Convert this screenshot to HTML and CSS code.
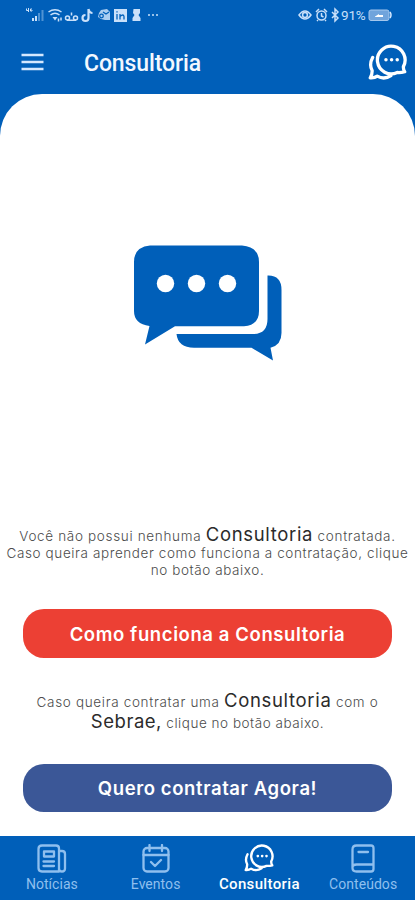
FILE: index.html
```html
<!DOCTYPE html>
<html lang="pt-BR">
<head>
<meta charset="utf-8">
<title>Consultoria</title>
<link rel="stylesheet" href="styles.css">
</head>
<body>
<svg class="defs" width="0" height="0" aria-hidden="true">
  <symbol id="chat" viewBox="0 0 40 38">
    <path d="M35.500 24.500A13.500 13.500 0 1 0 29.500 30.200Q33 30.500 36.800 29.500Q35.300 27.500 35.500 24.500Z"/>
    <path d="M5.500 15.500C2.800 20.500 3 24.500 5 28.200Q5.200 32 3.200 35.500Q7.400 35.800 10 33.800C14.500 36.300 19.500 35.800 23.300 33.200"/>
    <g fill="currentColor" stroke="none"><circle cx="18.500" cy="17.800" r="1.700"/><circle cx="24" cy="17.800" r="1.700"/><circle cx="29.500" cy="17.800" r="1.700"/></g>
  </symbol>
</svg>
<div class="app">
  <div class="status">
    <svg class="status-left" viewBox="0 0 138 18" width="138" height="18">
      <g fill="currentColor">
        <path d="M2.500 3.500v2h2M4.500 3v4M8 4H6.500v2H8V5" fill="none" stroke="currentColor" stroke-width="1"/>
        <path d="M8 13h2v3H8zM11 11h2v5h-2z"/>
        <path d="M14 8h2v8h-2zM17.500 5h2v11h-2z" opacity=".4"/>
        <path d="M28.500 12h5l-2.500 3.500z"/>
        <path d="M90 4h13v13H90z"/>
        <path d="M109.500 4h6.500v4l-1.500 2 2 3v3h-8v-3l2-3-1.500-2z"/>
        <circle cx="125" cy="10" r="1"/><circle cx="129" cy="10" r="1"/><circle cx="133" cy="10" r="1"/>
        <path d="M77 5l6-1 3 3v8h-5l-4-1-3-2 1-4z" opacity=".85"/>
      </g>
      <g fill="none" stroke="currentColor" stroke-width="1.500">
        <path d="M24.500 7q6.500-4.500 13 0M26.500 10q4.500-3.500 9 0M34.500 13.500v3M37 12.500v3"/>
        <circle cx="43.500" cy="13" r="2"/><circle cx="51.500" cy="13" r="2"/><path d="M43 15.200h9M47.500 7.500v3"/>
        <path stroke-width="2.200" d="M64.500 4v9a3 3 0 1 1-3-3M64.500 4q1 4 4 4"/>
      </g>
      <g fill="none" stroke="#0060bb" stroke-width="1.300"><path d="M93 9v5.500M93 6.200v1.400M96 14.500V9M96 11.500q3.500-3 4 0v3"/><circle cx="77.500" cy="11" r="1.800"/><path d="M79 7l3 2 3-2"/></g>
    </svg>
    <div class="status-right">
      <svg viewBox="0 0 42 16" width="42" height="16" fill="none" stroke="currentColor" stroke-width="1.500">
        <path d="M-1 8q6-8 12 0q-6 8-12 0z"/><circle cx="5" cy="8" r="2.400"/>
        <circle cx="21.500" cy="8.500" r="4.500"/><path d="M16 5l3-3M27 5l-3-3M21.500 6v3l2 1M18 13l-1 1M25 13l1 1"/>
        <path d="M32 5l6 6-3 3V2l3 3-6 6"/>
      </svg>
      <span class="battery-text">91%</span>
      <svg viewBox="0 0 24 14" width="24" height="14"><rect x="1" y="2" width="20" height="10.500" rx="2" fill="#70a4dc" stroke="#a4c7ed"/><path d="M7 8.500l4-2.500v1h4L15 9H7z" fill="#fff"/><path d="M22 4q2 3 0 6" stroke="#d5e8ff" fill="none" stroke-width="1.500"/></svg>
    </div>
  </div>
  <header class="bar">
    <svg class="menu" viewBox="0 0 23 18" width="23" height="18"><path d="M.5 2h22M.5 9h22M.5 16h22" stroke="currentColor" stroke-width="2.400"/></svg>
    <h1><span>Consultoria</span></h1>
    <svg class="header-chat"><use href="#chat"/></svg>
  </header>
  <main class="sheet">
    <svg class="hero" viewBox="0 0 150 118" width="150" height="118">
      <g fill="#005fb9">
        <path d="M17 1.500H109Q126 3 126 18V67Q126 81 111 82.300H42L12 100.500 16.500 82Q1 80 1 67V18Q1 3 17 1.500Z"/>
        <path d="M134.500 31.500Q148.500 31 148.500 46V89Q148.500 101 137.500 103.700L140 116.500 118.500 103.700H61Q45 103.700 43.500 90H120Q134.500 90 134.500 75Z"/>
      </g>
      <g fill="#fff"><circle cx="32.500" cy="39.500" r="8.700"/><circle cx="63.500" cy="39.500" r="8.700"/><circle cx="94.500" cy="39.500" r="8.700"/></g>
    </svg>
    <p class="copy copy-first">
      <span class="line l1">Você não possui nenhuma <b>Consultoria</b> contratada.</span>
      <span class="line l2">Caso queira aprender como funciona a contratação, clique</span>
      <span class="line l3">no botão abaixo.</span>
    </p>
    <button class="btn red"><span>Como funciona a Consultoria</span></button>
    <p class="copy copy-second">
      <span class="line l4">Caso queira contratar uma <b>Consultoria</b> com o</span>
      <span class="line l5"><b>Sebrae,</b> clique no botão abaixo.</span>
    </p>
    <button class="btn blue"><span>Quero contratar Agora!</span></button>
  </main>
  <nav class="tabs">
    <a class="tab"><svg viewBox="0 0 30 30" width="30" height="30"><path d="M5 1.500h14q3 0 3 3v23H5q-3.500 0-3.500-3.500V5Q1.500 1.500 5 1.500zM22 7h3q3 0 3 3v14.500q0 3-3 3t-3-3M7 7.500h10v5H7zM6.500 17.500h10.500M6.500 22h10.500"/></svg><span>Notícias</span></a>
    <a class="tab"><svg viewBox="0 0 30 30" width="30" height="30"><rect x="2.500" y="4" width="25" height="23.500" rx="3.500"/><path d="M2.500 11h25M8.500 1v6M21 1v6M10 18l4 4 6-6"/></svg><span>Eventos</span></a>
    <a class="tab active"><svg class="tab-chat"><use href="#chat"/></svg><span>Consultoria</span></a>
    <a class="tab"><svg viewBox="0 0 30 30" width="30" height="30"><path d="M25.500 20.500V4Q25.500 1.500 23 1.500H8.500Q4.500 1.500 4.500 5.500v18.500q0 3.500 4 3.500h14.500q2.500 0 2.500-2.500v-4.500H8.500q-4 0-4 3M10.500 8h9.500"/></svg><span>Conteúdos</span></a>
  </nav>
</div>
</body>
</html>
```
FILE: styles.css
```css
* { box-sizing: border-box; }
body { margin: 0; }
.defs { display: block; }
.app {
  width: 415px; height: 900px; overflow: hidden;
  display: flex; flex-direction: column;
  background: #005fb9; color: #eaf4ff;
  font-family: Roboto, sans-serif;
}
.status {
  height: 30px; flex: none; display: flex; justify-content: space-between;
  padding: 5px 23px 0 24px; color: #c9e0fa;
}
.status-right { display: flex; align-items: center; height: 20px; }
.battery-text { font-size: 13.5px; width: 27px; white-space: nowrap; letter-spacing: -.2px; }
.status-right svg:first-child { margin-right: -1px; overflow: visible; }
.bar {
  height: 64px; flex: none; display: flex; align-items: center;
  padding: 0 7px 0 21px;
}
.menu { color: #d4e8ff; margin-top: -1px; }
.bar h1 { margin: 3px auto 0 40px; font-size: 23px; line-height: 28px; font-weight: 500; color: #f2f8ff; letter-spacing: -.1px; }
.header-chat { width: 41px; height: 40px; margin-top: -3px; color: #fff; fill: none; stroke: currentColor; stroke-width: 3.2; stroke-linejoin: round; stroke-linecap: round; }
.sheet {
  flex: none; height: 742px; background: #fff;
  border-radius: 42px 42px 0 0;
  display: flex; flex-direction: column; align-items: center;
}
.hero { flex: none; margin: 150px 0 0; }
.copy {
  margin: 0; display: flex; flex-direction: column; align-items: center;
  font-family: Inter, sans-serif; font-weight: 300; font-size: 13.5px; color: #4c4c4c;
}
.copy-first { margin-top: 161px; height: 86px; }
.copy-second { margin-top: 31px; height: 75px; }
.line { display: block; white-space: nowrap; line-height: 18px; letter-spacing: .6px; }
.line b { font-weight: 400; font-size: 18.5px; color: #2b2b2b; }
.l1 { height: 21px; line-height: 22px; letter-spacing: .67px; }
.l3 { margin-top: -1px; }
.l4, .l5 { height: 21px; line-height: 22px; letter-spacing: .67px; }
.l5 { letter-spacing: .53px; }
.btn {
  flex: none; width: 369px; height: 48.5px; border: 0; border-radius: 21px;
  padding: 1px 0 0; color: #fff; font: 600 18.5px/24px Inter, sans-serif; letter-spacing: .6px;
}
.red { background: #ec4034; }
.blue { background: #3b5797; }
.tabs {
  height: 64px; flex: none; display: grid; grid-template-columns: repeat(4, 1fr);
}
.tab {
  display: flex; flex-direction: column; align-items: center;
  padding-top: 8px; color: #8fbfee; font-size: 14px; line-height: 18px;
}
.tab svg { fill: none; stroke: currentColor; stroke-width: 2.3; stroke-linejoin: round; stroke-linecap: round; flex: none; }
.tab span { margin-top: 1px; letter-spacing: .05px; }
.active { color: #fff; font-weight: 500; font-size: 15px; }
.active span { letter-spacing: .35px; }
.tab .tab-chat { width: 32px; height: 30px; margin: -2px 0 2px; stroke-width: 3; }
```
